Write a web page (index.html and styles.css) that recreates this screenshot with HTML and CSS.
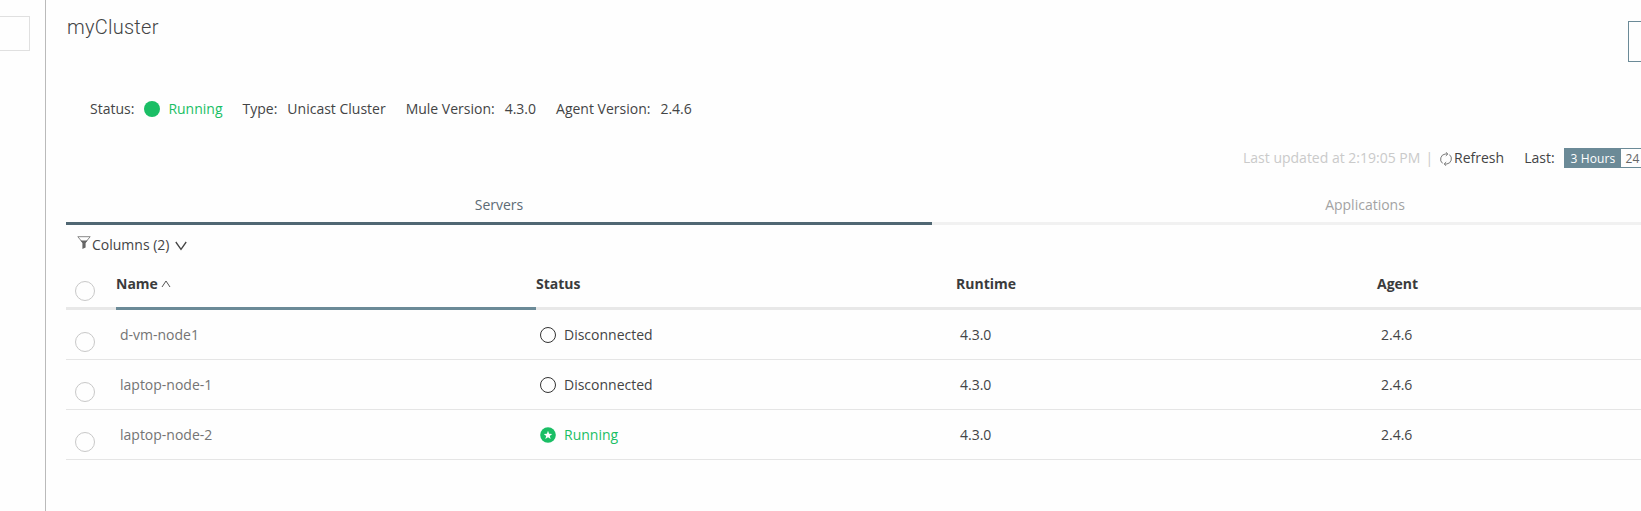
FILE: index.html
```html
<!DOCTYPE html>
<html lang="en">
<head>
<meta charset="utf-8">
<title>myCluster</title>
<link rel="stylesheet" href="styles.css">
</head>
<body>
<div class="page">
  <aside class="sidebar"><div class="sidebar-box"></div></aside>
  <main class="main">
    <header class="header">
      <h1 class="title">myCluster</h1>
      <div class="action"></div>
    </header>
    <div class="summary">
      <div class="pair"><span>Status:</span><span class="dot"></span><span class="running">Running</span></div>
      <div class="pair"><span>Type:</span><span>Unicast Cluster</span></div>
      <div class="pair"><span>Mule Version:</span><span>4.3.0</span></div>
      <div class="pair"><span>Agent Version:</span><span>2.4.6</span></div>
    </div>
    <div class="toolbar">
      <span class="updated">Last updated at 2:19:05 PM</span>
      <span class="divider">|</span>
      <span class="refresh">
        <svg width="14" height="14" viewBox="0 0 14 14" fill="none" stroke="#777"><path d="M3.6 11.4A5.3 5.3 0 0 1 6.2 2H8.6M10.4 2.6A5.3 5.3 0 0 1 7.8 12H5.4"/><path d="M6.8.2 8.8 2 6.8 3.9M7.2 10.1 5.2 12l2 1.8"/></svg>Refresh</span>
      <span class="last">Last:</span>
      <div class="range"><span class="range-item selected">3 Hours</span><span class="range-item">24</span></div>
    </div>
    <nav class="tabs">
      <div class="tab active">Servers</div>
      <div class="tab">Applications</div>
    </nav>
    <div class="columns">
      <svg width="14" height="14" viewBox="0 0 14 14"><path d="M.8.7h12.4L8.4 6.5H5.6z" fill="none" stroke="#888"/><path d="M3.4 4.6h7.2L8.6 7v4.6L5.4 13V7z" fill="#666"/></svg>
      <span class="columns-label">Columns (2)</span>
      <svg class="chevron" width="12" height="10" viewBox="0 0 12 10" fill="none" stroke="#444" stroke-width="1.3"><path d="M.8 1 6 8.3 11.2 1"/></svg>
    </div>
    <div class="table">
      <div class="row head">
        <div class="cell check"><span class="radio"></span></div>
        <div class="cell sorted">Name<svg class="caret" width="10" height="8" viewBox="0 0 10 8" fill="none" stroke="#555"><path d="M1 7 5 1l4 6"/></svg></div>
        <div class="cell">Status</div>
        <div class="cell">Runtime</div>
        <div class="cell">Agent</div>
      </div>
      <div class="row">
        <div class="cell check"><span class="radio"></span></div>
        <div class="cell name">d-vm-node1</div>
        <div class="cell"><span class="ring"></span>Disconnected</div>
        <div class="cell">4.3.0</div>
        <div class="cell">2.4.6</div>
      </div>
      <div class="row">
        <div class="cell check"><span class="radio"></span></div>
        <div class="cell name">laptop-node-1</div>
        <div class="cell"><span class="ring"></span>Disconnected</div>
        <div class="cell">4.3.0</div>
        <div class="cell">2.4.6</div>
      </div>
      <div class="row">
        <div class="cell check"><span class="radio"></span></div>
        <div class="cell name">laptop-node-2</div>
        <div class="cell running"><svg class="star" width="16" height="16" viewBox="0 0 16 16"><circle cx="8" cy="8" r="7.8" fill="#1abe65"/><path d="M8 3.8 9.1 6.8l3.1.1-2.4 2 .9 3.1L8 10.2l-2.7 1.8.9-3.1-2.4-2 3.100-.1z" fill="#fff"/></svg>Running</div>
        <div class="cell">4.3.0</div>
        <div class="cell">2.4.6</div>
      </div>
    </div>
  </main>
</div>
</body>
</html>
```

FILE: styles.css
```css
* { box-sizing: border-box; }
body {
  margin: 0;
  background: #fefefe;
  color: #434445;
  font: 14px/20px "Open Sans", sans-serif;
}
.page { display: flex; height: 511px; overflow: hidden; }
.sidebar {
  flex: 0 0 46px;
  padding-top: 16px;
  border-right: 1px solid #bababa;
}
.sidebar-box {
  width: 30px;
  height: 35px;
  border: 1px solid #e0e0e0;
  border-left: 0;
}
.main { flex: 0 0 1752px; padding-left: 20px; }
.header { display: flex; height: 99px; }
.title {
  flex: 0 0 1561px;
  margin: 14px 0 0 1px;
  font: 300 20px/27px Roboto, sans-serif;
  letter-spacing: 0.25px;
}
.action {
  width: 120px;
  height: 41px;
  margin-top: 21px;
  border: 1px solid #6b8a97;
}
.summary { display: flex; gap: 20px; height: 20px; padding-left: 24px; }
.pair { display: flex; gap: 10px; white-space: nowrap; }
.dot {
  width: 16px;
  height: 16px;
  margin-top: 2px;
  margin-right: -2px;
  border-radius: 50%;
  background: #1abe65;
}
.running { color: #1abe65; }
.toolbar {
  display: flex;
  height: 20px;
  margin-top: 29px;
  padding-left: 1177px;
  white-space: nowrap;
}
.updated, .divider { color: #cacaca; }
.divider { margin-left: 5px; }
.refresh { display: flex; margin-left: 6px; }
.refresh svg { margin: 4px 1px 0 0; }
.last { margin-left: 20px; }
.range {
  display: flex;
  height: 20px;
  margin-left: 9px;
  border: 1px solid #6b8a97;
  border-right: 0;
  font-size: 12px;
  line-height: 19px;
}
.range-item { width: 40px; padding-left: 5px; color: #666; }
.range-item.selected {
  width: 56px;
  padding-left: 6px;
  background: #6b8a97;
  color: #fff;
  letter-spacing: 0.1px;
}
.tabs { display: flex; margin-top: 27px; }
.tab {
  width: 866px;
  height: 30px;
  border-bottom: 3px solid #f1f1f1;
  color: #a3a3a3;
  text-align: center;
}
.tab.active { border-color: #506773; color: #5c6b75; }
.columns { display: flex; height: 30px; padding: 10px 0 0 11px; }
.columns svg { margin-top: 1px; }
.columns-label { margin-left: 1px; }
.columns .chevron { margin: 6px 0 0 6px; }
.row {
  display: grid;
  grid-template-columns: 50px 420px 420px 421px 421px;
  height: 50px;
  border-bottom: 1px solid #e5e5e5;
}
.cell { display: flex; padding: 15px 0 0 4px; }
.cell.check { padding: 22px 0 0 9px; }
.cell.name { color: #747474; }
.radio {
  width: 20px;
  height: 20px;
  border: 1px solid #c8c8c8;
  border-radius: 50%;
}
.ring {
  width: 16px;
  height: 16px;
  margin: 2px 8px 0 0;
  border: 1px solid #333;
  border-radius: 50%;
}
.star { margin: 2px 8px 0 0; }
.head { height: 55px; border: 0; color: #3a3b3c; font-weight: 700; }
.head .cell { padding: 19px 0 0; border-bottom: 3px solid #e8e8e8; }
.head .cell.check { padding: 26px 0 0 9px; }
.head .cell.sorted { border-color: #6b8a97; }
.caret { margin: 6px 0 0 3px; }
```
